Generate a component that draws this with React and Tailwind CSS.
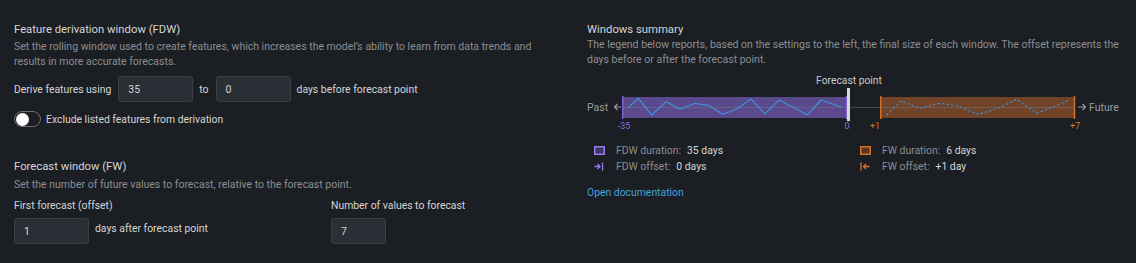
import React from 'react';

const font = { fontFamily: 'Roboto, "Liberation Sans", sans-serif' };

const fdwLine = [
  [40.7, 36.3], [51.3, 26.3], [64.7, 43], [79, 29.7], [93, 37], [108, 31.3], [121.3, 33.3],
  [135.7, 42.3], [149.7, 37], [164, 27], [178, 42], [192, 28], [206.3, 35.3], [220.3, 43],
  [234, 28], [255, 35.3],
];

const fwLine = [
  [299.7, 43], [314, 29], [333, 36.3], [353, 31.3], [369.7, 33.7], [391.3, 42.3],
  [411.3, 36.3], [429.7, 27.3], [449.7, 41.3], [466.3, 34.7], [483, 28],
];

const pts = (arr) => arr.map((p) => p.join(',')).join(' ');

const Input = ({ value, width }) => (
  <div
    className={`${width} h-[26px] flex items-center pl-[9px] bg-[#2a2e35] border border-[#3a3f47] rounded-[3px] text-[10.5px] text-[#d3d5d8]`}
  >
    {value}
  </div>
);

const Toggle = () => (
  <div className="w-[27px] h-[16px] rounded-full border border-[#6c7076] bg-[#1b1e22] flex items-center pl-[1px]">
    <div className="w-[13px] h-[13px] rounded-full bg-white" />
  </div>
);

const WindowChart = () => (
  <svg width="540" height="62" viewBox="0 0 540 62" className="block">
    <text x="262" y="12" textAnchor="middle" fontSize="10.3" fill="#c9cbce" style={font}>
      Forecast point
    </text>
    <text x="0" y="39" fontSize="10.5" fill="#9a9da2" style={font}>Past</text>
    <path d="M34 35H27.5M30.5 32L27.5 35L30.5 38" stroke="#9a9da2" strokeWidth="1.2" fill="none" />

    <rect x="35" y="25" width="225" height="21" fill="#5a4a8c" />
    <line x1="35.75" y1="24" x2="35.75" y2="47" stroke="#7d5fd6" strokeWidth="1.5" />
    <line x1="259.5" y1="24" x2="259.5" y2="47" stroke="#7d5fd6" strokeWidth="1.5" />

    <rect x="293" y="25" width="195" height="21" fill="#71442a" />
    <line x1="293.75" y1="24" x2="293.75" y2="47" stroke="#d06e2a" strokeWidth="1.5" />
    <line x1="487.5" y1="24" x2="487.5" y2="47" stroke="#d06e2a" strokeWidth="1.5" />

    <line x1="36" y1="35.5" x2="488" y2="35.5" stroke="#7a7c86" strokeOpacity="0.45" strokeWidth="1" />

    <polyline points={pts(fdwLine)} fill="none" stroke="#3f91d8" strokeWidth="1.2" />
    <polyline points={pts(fwLine)} fill="none" stroke="#4a86c0" strokeWidth="1.2" strokeDasharray="2.5 2" />

    <rect x="260" y="16" width="3" height="33" fill="#d9d9d9" />

    <path d="M491 35H498.5M495.5 32L498.5 35L495.5 38" stroke="#9a9da2" strokeWidth="1.2" fill="none" />
    <text x="502" y="39" fontSize="10.5" fill="#9a9da2" style={font}>Future</text>

    <text x="37" y="57" textAnchor="middle" fontSize="9" fill="#8a6ee0" style={font}>-35</text>
    <text x="260" y="57" textAnchor="middle" fontSize="9" fill="#8a6ee0" style={font}>0</text>
    <text x="288" y="57" textAnchor="middle" fontSize="9" fill="#d7772f" style={font}>+1</text>
    <text x="488" y="57" textAnchor="middle" fontSize="9" fill="#d7772f" style={font}>+7</text>
  </svg>
);

const LegendItem = ({ icon, label, value }) => (
  <div className="flex items-center h-[15px]">
    <div className="w-[22px] flex items-center">{icon}</div>
    <span className="text-[#8b8e93]">{label}</span>
    <span className="ml-[6px] text-[#d4d6d9]">{value}</span>
  </div>
);

const BoxIcon = ({ stroke, fill }) => (
  <svg width="11" height="9" viewBox="0 0 11 9">
    <rect x="0.75" y="0.75" width="9.5" height="7.5" fill={fill} stroke={stroke} strokeWidth="1.5" />
  </svg>
);

const ToIcon = () => (
  <svg width="10" height="9" viewBox="0 0 10 9">
    <path d="M0.5 4.5H6M3.5 2L6 4.5L3.5 7" stroke="#9a7ae8" strokeWidth="1.3" fill="none" />
    <line x1="8.5" y1="0.5" x2="8.5" y2="8.5" stroke="#9a7ae8" strokeWidth="1.3" />
  </svg>
);

const FromIcon = () => (
  <svg width="10" height="9" viewBox="0 0 10 9">
    <line x1="1" y1="0.5" x2="1" y2="8.5" stroke="#d6722c" strokeWidth="1.3" />
    <path d="M9.5 4.5H3.5M6 2L3.5 4.5L6 7" stroke="#d6722c" strokeWidth="1.3" fill="none" />
  </svg>
);

export default function App() {
  return (
    <div className="w-[1136px] h-[263px] bg-[#1b1e22] flex text-[10.4px] leading-[15px] overflow-hidden" style={font}>
      {/* Left: settings */}
      <div className="w-[587px] shrink-0 pl-[14px] pt-[22px] flex flex-col">
        <div className="text-[11.3px] text-[#d4d6d9]">Feature derivation window (FDW)</div>
        <div className="mt-[2px] text-[10.5px] text-[#8b8e93] whitespace-nowrap">
          Set the rolling window used to create features, which increases the model’s ability to learn from data trends and
          <br />
          results in more accurate forecasts.
        </div>
        <div className="mt-[7px] h-[26px] flex items-center text-[#d4d6d9]">
          <span>Derive features using</span>
          <div className="ml-[7px]"><Input value="35" width="w-[75px]" /></div>
          <span className="ml-[6px]">to</span>
          <div className="ml-[7px]"><Input value="0" width="w-[75px]" /></div>
          <span className="ml-[6px]">days before forecast point</span>
        </div>
        <div className="mt-[9px] h-[16px] flex items-center text-[#d4d6d9]">
          <Toggle />
          <span className="ml-[5px]">Exclude listed features from derivation</span>
        </div>

        <div className="mt-[32px] text-[11.3px] text-[#d4d6d9]">Forecast window (FW)</div>
        <div className="mt-[3px] text-[10.5px] text-[#8b8e93]">
          Set the number of future values to forecast, relative to the forecast point.
        </div>
        <div className="mt-[6px] flex text-[#d4d6d9]">
          <div className="w-[317px]">
            <div>First forecast (offset)</div>
            <div className="mt-[5px] flex items-start">
              <Input value="1" width="w-[75px]" />
              <span className="ml-[6px] mt-[3px]">days after forecast point</span>
            </div>
          </div>
          <div>
            <div>Number of values to forecast</div>
            <div className="mt-[5px]">
              <Input value="7" width="w-[55px]" />
            </div>
          </div>
        </div>
      </div>

      {/* Right: summary */}
      <div className="w-[549px] shrink-0 pt-[22px] flex flex-col">
        <div className="text-[11.3px] text-[#d4d6d9]">Windows summary</div>
        <div className="text-[10.5px] text-[#8b8e93] whitespace-nowrap">
          The legend below reports, based on the settings to the left, the final size of each window. The offset represents the
          <br />
          days before or after the forecast point.
        </div>
        <div className="mt-[5px]">
          <WindowChart />
        </div>
        <div className="mt-[9px] pl-[7px] grid grid-cols-[266px_1fr] gap-y-[1px]">
          <LegendItem icon={<BoxIcon stroke="#9a7ae8" fill="#3c3460" />} label="FDW duration:" value="35 days" />
          <LegendItem icon={<BoxIcon stroke="#d6722c" fill="#5a3520" />} label="FW duration:" value="6 days" />
          <LegendItem icon={<ToIcon />} label="FDW offset:" value="0 days" />
          <LegendItem icon={<FromIcon />} label="FW offset:" value="+1 day" />
        </div>
        <div className="mt-[11px] text-[#45a2da]">Open documentation</div>
      </div>
    </div>
  );
}
